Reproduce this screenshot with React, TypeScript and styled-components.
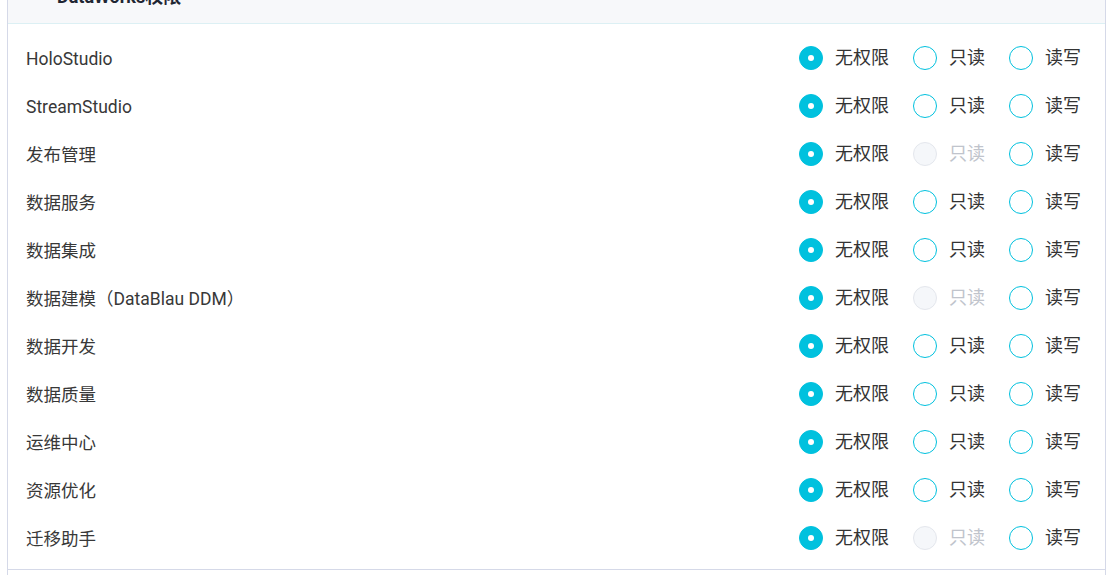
import styled, { createGlobalStyle } from "styled-components";

type Level = "none" | "read" | "write";

interface Module {
  name: string;
  value: Level;
  readDisabled?: boolean;
}

const modules: Module[] = [
  { name: "HoloStudio", value: "none" },
  { name: "StreamStudio", value: "none" },
  { name: "发布管理", value: "none", readDisabled: true },
  { name: "数据服务", value: "none" },
  { name: "数据集成", value: "none" },
  { name: "数据建模（DataBlau DDM）", value: "none", readDisabled: true },
  { name: "数据开发", value: "none" },
  { name: "数据质量", value: "none" },
  { name: "运维中心", value: "none" },
  { name: "资源优化", value: "none" },
  { name: "迁移助手", value: "none", readDisabled: true },
];

const options: { key: Level; label: string }[] = [
  { key: "none", label: "无权限" },
  { key: "read", label: "只读" },
  { key: "write", label: "读写" },
];

const GlobalStyle = createGlobalStyle`
  html, body {
    margin: 0;
    padding: 0;
    background: #ffffff;
  }
  body {
    font-family: Roboto, "Noto Sans CJK SC", "Noto Sans", sans-serif;
    color: #333333;
  }
`;

export default function App() {
  return (
    <>
      <GlobalStyle />
      <Page>
        <Panel>
          <PanelHeader>
            <Title>DataWorks权限</Title>
          </PanelHeader>
          <List>
            {modules.map((m) => (
              <Row key={m.name}>
                <Label>{m.name}</Label>
                <Group>
                  {options.map((o) => {
                    const disabled = o.key === "read" && !!m.readDisabled;
                    return (
                      <Option key={o.key}>
                        <Radio $checked={m.value === o.key} $disabled={disabled} />
                        <OptionText $disabled={disabled}>{o.label}</OptionText>
                      </Option>
                    );
                  })}
                </Group>
              </Row>
            ))}
          </List>
        </Panel>
      </Page>
    </>
  );
}

const Page = styled.div`
  height: 575px;
  padding-left: 7px;
  padding-right: 3px;
  overflow: hidden;
`;

const Panel = styled.div`
  height: 100%;
  border-left: 1px solid #d5d9e8;
  border-right: 1px solid #d5d9e8;
  display: flex;
  flex-direction: column;
`;

const PanelHeader = styled.div`
  height: 24px;
  flex-shrink: 0;
  background: #f7f8fa;
  border-bottom: 1px solid #dcf0f4;
  display: flex;
  align-items: flex-end;
  padding-left: 49px;
  padding-bottom: 17px;
  box-sizing: border-box;
  overflow: hidden;
`;

const Title = styled.div`
  font-size: 18px;
  line-height: 18px;
  font-weight: 700;
  color: #1f2633;
  white-space: nowrap;
`;

const List = styled.div`
  padding: 10px 24px 7px 18px;
  border-bottom: 1px solid #d5d9e8;
`;

const Row = styled.div`
  height: 48px;
  display: flex;
  align-items: center;
  justify-content: space-between;
`;

const Label = styled.div`
  font-size: 17.5px;
  line-height: 24px;
  padding-top: 2px;
  color: #383838;
`;

const Group = styled.div`
  display: flex;
  align-items: center;
  gap: 24px;
`;

const Option = styled.label`
  display: flex;
  align-items: center;
  gap: 12px;
  cursor: pointer;
`;

const Radio = styled.span<{ $checked: boolean; $disabled: boolean }>`
  width: 24px;
  height: 24px;
  box-sizing: border-box;
  border-radius: 50%;
  border: 1px solid ${(p) => (p.$disabled ? "#e4e7ed" : "#00c1de")};
  background: ${(p) => (p.$disabled ? "#f5f7fa" : p.$checked ? "#00c1de" : "#ffffff")};
  display: flex;
  align-items: center;
  justify-content: center;

  &::after {
    content: "";
    width: 6px;
    height: 6px;
    border-radius: 50%;
    background: #ffffff;
    display: ${(p) => (p.$checked ? "block" : "none")};
  }
`;

const OptionText = styled.span<{ $disabled: boolean }>`
  font-size: 18px;
  line-height: 24px;
  color: ${(p) => (p.$disabled ? "#c0c4cc" : "#333333")};
`;
